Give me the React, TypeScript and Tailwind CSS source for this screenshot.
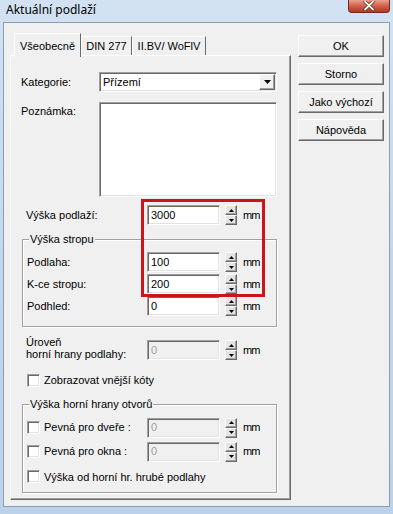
const raised =
  "border border-t-white border-l-white border-r-[#696969] border-b-[#696969] shadow-[inset_-1px_-1px_0_#a0a0a0]";
const sunken =
  "border border-t-[#a0a0a0] border-l-[#a0a0a0] border-r-white border-b-white shadow-[inset_1px_1px_0_#696969,inset_-1px_-1px_0_#e3e3e3]";
const etched = "border border-[#a0a0a0] shadow-[1px_1px_0_#fff,inset_1px_1px_0_#fff]";

function Tri({ down }: { down?: boolean }) {
  return (
    <svg width="5" height="3" viewBox="0 0 5 3">
      <polygon points={down ? "0,0 5,0 2.5,3" : "0,3 5,3 2.5,0"} fill="#000" />
    </svg>
  );
}

function Spinner() {
  return (
    <div className="ml-[5px] flex h-[20px] w-[12px] flex-col">
      <div className={`flex h-[10px] items-center justify-center bg-[#e4e4e4] ${raised}`}>
        <Tri />
      </div>
      <div className={`flex h-[10px] items-center justify-center bg-[#e4e4e4] ${raised}`}>
        <Tri down />
      </div>
    </div>
  );
}

function NumField({ value, disabled }: { value: string; disabled?: boolean }) {
  return (
    <div className="flex items-center">
      <div
        className={`flex h-[20px] w-[73px] items-center pl-[3px] ${sunken} ${
          disabled ? "bg-[#f0f0f0] text-[#a0a0a0]" : "bg-white text-black"
        }`}
      >
        {value}
      </div>
      <Spinner />
      <span className="ml-[6px] tracking-[-1px]">mm</span>
    </div>
  );
}

function Check({ label }: { label: string }) {
  return (
    <div className="flex items-center">
      <div className={`h-[13px] w-[13px] bg-white ${sunken}`} />
      <span className="ml-[4px] whitespace-nowrap">{label}</span>
    </div>
  );
}

function Group({ title, children, className }: { title: string; children: React.ReactNode; className?: string }) {
  return (
    <div className={`relative ml-[1px] w-[255px] ${etched} ${className ?? ""}`}>
      <span className="absolute -top-[7px] left-[6px] bg-[#f0f0f0] px-[1px] leading-[13px]">{title}</span>
      {children}
    </div>
  );
}

export default function App() {
  return (
    <div className="flex h-[514px] w-[393px] flex-col overflow-hidden bg-gradient-to-b from-[#d2e2f3] via-[#c3d7ec] to-[#bcd2ea] font-['Liberation_Sans',Arial,sans-serif] text-[11px] text-black">
      {/* title bar */}
      <div className="flex h-[22px] shrink-0 items-start justify-between pl-[6px] pr-[3px]">
        <span className="pt-[2px] font-['Noto_Sans',sans-serif] text-[12px] leading-[16px] text-black">
          Aktuální podlaží
        </span>
        <div className="flex h-[13px] w-[42px] items-center justify-center rounded-b-[4px] border border-t-0 border-[#6e2b22] bg-gradient-to-b from-[#e9a08f] via-[#d0604b] to-[#b9341f]">
          <svg width="12" height="10" viewBox="0 0 12 10">
            <path d="M2 0.5 L10 8.5 M10 0.5 L2 8.5" stroke="#5a2218" strokeWidth="3.2" strokeLinecap="round" />
            <path d="M2 0.5 L10 8.5 M10 0.5 L2 8.5" stroke="#fff" strokeWidth="1.8" strokeLinecap="round" />
          </svg>
        </div>
      </div>

      {/* dialog body */}
      <div className="mx-[3px] mb-[7px] flex flex-1 border border-[#8b9db3] bg-[#f0f0f0] pl-[6px] pt-[10px]">
        <div className="flex w-[281px] flex-col">
          {/* tabs */}
          <div className="flex h-[22px] items-end pl-[4px]">
            <div className="relative z-10 -mb-[2px] flex h-[24px] w-[67px] items-start justify-center border border-b-0 border-t-white border-l-white border-r-[#696969] bg-[#f0f0f0] pt-[4px]">
              Všeobecně
            </div>
            <div className="flex h-[19px] w-[51px] items-center justify-center border border-b-0 border-t-white border-l-white border-r-[#696969] bg-[#f0f0f0]">
              DIN 277
            </div>
            <div className="flex h-[19px] w-[74px] items-center justify-center border border-b-0 border-t-white border-l-white border-r-[#696969] bg-[#f0f0f0]">
              II.BV/ WoFlV
            </div>
          </div>

          {/* tab panel */}
          <div className={`relative h-[445px] pl-[10px] ${raised}`}>
            <div className="mt-[16px] flex h-[20px] items-center">
              <span className="w-[78px]">Kategorie:</span>
              <div className={`flex h-[20px] w-[178px] items-center justify-between bg-white pl-[3px] pr-[1px] ${sunken}`}>
                <span>Přízemí</span>
                <div className={`flex h-[16px] w-[16px] items-center justify-center bg-[#f0f0f0] ${raised}`}>
                  <svg width="7" height="4" viewBox="0 0 7 4">
                    <polygon points="0,0 7,0 3.5,4" fill="#000" />
                  </svg>
                </div>
              </div>
            </div>

            <div className="mt-[10px] flex">
              <span className="w-[78px] pt-[1px]">Poznámka:</span>
              <div className={`h-[95px] w-[178px] bg-white ${sunken}`} />
            </div>

            <div className="mt-[8px] flex items-center">
              <span className="w-[126px] pl-[5px]">Výška podlaží:</span>
              <NumField value="3000" />
            </div>

            <Group title="Výška stropu" className="mt-[14px] pb-[10px] pt-[12px]">
              <div className="flex flex-col gap-[2px]">
                <div className="flex items-center">
                  <span className="w-[124px] pl-[4px]">Podlaha:</span>
                  <NumField value="100" />
                </div>
                <div className="flex items-center">
                  <span className="w-[124px] pl-[4px]">K-ce stropu:</span>
                  <NumField value="200" />
                </div>
                <div className="flex items-center">
                  <span className="w-[124px] pl-[4px]">Podhled:</span>
                  <NumField value="0" />
                </div>
              </div>
            </Group>

            <div className="mt-[9px] flex items-start">
              <span className="w-[126px] pl-[5px] leading-[12px]">
                Úroveň
                <br />
                horní hrany podlahy:
              </span>
              <div className="mt-[4px]">
                <NumField value="0" disabled />
              </div>
            </div>

            <div className="mt-[12px] pl-[6px]">
              <Check label="Zobrazovat vnější kóty" />
            </div>

            <Group title="Výška horní hrany otvorů" className="mt-[15px] pb-[7px] pl-[4px] pt-[13px]">
              <div className="flex items-center">
                <div className="w-[120px]">
                  <Check label="Pevná pro dveře :" />
                </div>
                <NumField value="0" disabled />
              </div>
              <div className="mt-[4px] flex items-center">
                <div className="w-[120px]">
                  <Check label="Pevná pro okna :" />
                </div>
                <NumField value="0" disabled />
              </div>
              <div className="mt-[7px]">
                <Check label="Výška od horní hr. hrubé podlahy" />
              </div>
            </Group>

            {/* highlight */}
            <div className="absolute left-[130px] top-[143px] h-[98px] w-[124px] border-[3px] border-[#cc1419]" />
          </div>
        </div>

        {/* buttons */}
        <div className="ml-[7px] flex flex-col gap-[6px] pt-[2px]">
          {["OK", "Storno", "Jako výchozí", "Nápověda"].map((b) => (
            <button key={b} className={`flex h-[22px] w-[86px] items-center justify-center bg-[#f0f0f0] ${raised}`}>
              {b}
            </button>
          ))}
        </div>
      </div>
    </div>
  );
}
